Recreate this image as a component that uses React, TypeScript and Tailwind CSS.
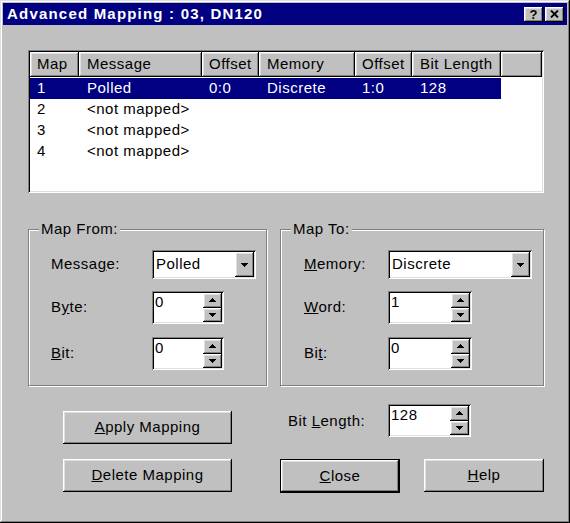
import React from "react";

const raised =
  "shadow-[inset_-1px_-1px_#000,inset_1px_1px_#fff,inset_-2px_-2px_#808080,inset_2px_2px_#dfdfdf]";
const sunken =
  "shadow-[inset_1px_1px_#808080,inset_-1px_-1px_#fff,inset_2px_2px_#000,inset_-2px_-2px_#dfdfdf]";

function Tri({ up }: { up?: boolean }) {
  return (
    <svg width="7" height="4" viewBox="0 0 7 4" shapeRendering="crispEdges">
      {up ? (
        <polygon points="3.5,0 7,4 0,4" fill="#000" />
      ) : (
        <polygon points="0,0 7,0 3.5,4" fill="#000" />
      )}
    </svg>
  );
}

function SmallTri({ up }: { up?: boolean }) {
  return (
    <svg width="7" height="4" viewBox="0 0 7 4" shapeRendering="crispEdges">
      {up ? (
        <polygon points="3.5,0 7,4 0,4" fill="#000" />
      ) : (
        <polygon points="0,0 7,0 3.5,4" fill="#000" />
      )}
    </svg>
  );
}

function Spin({ value, width }: { value: string; width: string }) {
  return (
    <div className={`flex h-[33px] ${width} bg-white p-[2px] ${sunken}`}>
      <div className="flex-1 pl-[1px] leading-[17px]">{value}</div>
      <div className="flex w-[19px] flex-col">
        <div className={`flex flex-1 items-center justify-center bg-[#c0c0c0] ${raised}`}>
          <SmallTri up />
        </div>
        <div className={`flex flex-1 items-center justify-center bg-[#c0c0c0] ${raised}`}>
          <SmallTri />
        </div>
      </div>
    </div>
  );
}

function Combo({ value, width }: { value: string; width: string }) {
  return (
    <div className={`flex h-[29px] ${width} bg-white p-[2px] ${sunken}`}>
      <div className="flex flex-1 items-center pl-[2px]">{value}</div>
      <div className={`flex w-[19px] items-center justify-center bg-[#c0c0c0] ${raised}`}>
        <Tri />
      </div>
    </div>
  );
}

function Button({
  children,
  width,
  isDefault,
}: {
  children: React.ReactNode;
  width: string;
  isDefault?: boolean;
}) {
  if (isDefault) {
    return (
      <div className={`h-[34px] ${width} border border-black`}>
        <div className={`flex h-full w-full items-center justify-center bg-[#c0c0c0] ${raised}`}>
          {children}
        </div>
      </div>
    );
  }
  return (
    <div className={`flex h-[33px] ${width} items-center justify-center bg-[#c0c0c0] ${raised}`}>
      {children}
    </div>
  );
}

const cols = [
  { key: "map", label: "Map", w: "w-[49px]", pl: "pl-[7px]" },
  { key: "msg", label: "Message", w: "w-[123px]", pl: "pl-[8px]" },
  { key: "off", label: "Offset", w: "w-[57px]", pl: "pl-[7px]" },
  { key: "mem", label: "Memory", w: "w-[96px]", pl: "pl-[8px]" },
  { key: "off2", label: "Offset", w: "w-[57px]", pl: "pl-[7px]" },
  { key: "bl", label: "Bit Length", w: "w-[89px]", pl: "pl-[8px]" },
] as const;

type Row = Record<(typeof cols)[number]["key"], string> & { sel?: boolean };

const rows: Row[] = [
  { map: "1", msg: "Polled", off: "0:0", mem: "Discrete", off2: "1:0", bl: "128", sel: true },
  { map: "2", msg: "<not mapped>", off: "", mem: "", off2: "", bl: "" },
  { map: "3", msg: "<not mapped>", off: "", mem: "", off2: "", bl: "" },
  { map: "4", msg: "<not mapped>", off: "", mem: "", off2: "", bl: "" },
];

export default function App() {
  return (
    <div
      className={`flex h-[523px] w-[570px] flex-col bg-[#c0c0c0] p-[3px] font-['Liberation_Sans',Arial,sans-serif] text-[15px] tracking-[0.5px] text-black ${"shadow-[inset_-1px_-1px_#000,inset_1px_1px_#dfdfdf,inset_-2px_-2px_#808080,inset_2px_2px_#fff]"}`}
    >
      {/* Title bar */}
      <div className="flex h-[22px] items-center bg-[#000080] pl-[4px] pr-[3px]">
        <div className="flex-1 text-[15px] font-bold leading-[22px] tracking-[1.2px] text-white">
          Advanced Mapping : 03, DN120
        </div>
        <div className="flex gap-[2px]">
          <div
            className={`flex h-[15px] w-[19px] items-center justify-center bg-[#c0c0c0] text-[13px] font-bold leading-none tracking-normal ${raised}`}
          >
            ?
          </div>
          <div className={`flex h-[15px] w-[19px] items-center justify-center bg-[#c0c0c0] ${raised}`}>
            <svg width="9" height="8" viewBox="0 0 9 8">
              <path d="M1 0.5 L8 7.5 M8 0.5 L1 7.5" stroke="#000" strokeWidth="1.8" />
            </svg>
          </div>
        </div>
      </div>

      <div className="flex flex-col pl-[25px]">
        {/* List */}
        <div className={`mt-[25px] flex h-[143px] w-[516px] flex-col bg-white p-[2px] ${sunken}`}>
          <div className="flex h-[25px]">
            {cols.map((c, i) => (
              <div
                key={i}
                className={`flex h-full ${c.w} ${c.pl} items-center bg-[#c0c0c0] ${raised}`}
              >
                {c.label}
              </div>
            ))}
            <div className={`h-full flex-1 bg-[#c0c0c0] ${raised}`} />
          </div>
          <div className="mt-[1px] flex flex-col">
            {rows.map((r, i) => (
              <div
                key={i}
                className={`flex h-[21px] w-[471px] items-center ${r.sel ? "bg-[#000080] text-white" : ""}`}
              >
                {cols.map((c, j) => (
                  <div key={j} className={`${c.w} ${c.pl} whitespace-nowrap`}>
                    {r[c.key]}
                  </div>
                ))}
              </div>
            ))}
          </div>
        </div>

        {/* Groups */}
        <div className="mt-[36px] flex gap-[13px]">
          <div className="relative h-[157px] w-[239px] border border-[#808080] pl-[22px] pt-[20px] shadow-[inset_1px_1px_#fff,1px_1px_#fff]">
            <span className="absolute -top-[10px] left-[10px] bg-[#c0c0c0] px-[2px] leading-[18px]">
              Map From:
            </span>
            <div className="flex h-[29px] items-center">
              <div className="w-[101px]">
                Messa<span className="underline">g</span>e:
              </div>
              <Combo value="Polled" width="w-[104px]" />
            </div>
            <div className="mt-[12px] flex h-[33px] items-center">
              <div className="w-[101px]">
                B<span className="underline">y</span>te:
              </div>
              <Spin value="0" width="w-[72px]" />
            </div>
            <div className="mt-[13px] flex h-[33px] items-center">
              <div className="w-[101px]">
                <span className="underline">B</span>it:
              </div>
              <Spin value="0" width="w-[72px]" />
            </div>
          </div>

          <div className="relative h-[157px] w-[264px] border border-[#808080] pl-[23px] pt-[20px] shadow-[inset_1px_1px_#fff,1px_1px_#fff]">
            <span className="absolute -top-[10px] left-[10px] bg-[#c0c0c0] px-[2px] leading-[18px]">
              Map To:
            </span>
            <div className="flex h-[29px] items-center">
              <div className="w-[84px]">
                <span className="underline">M</span>emory:
              </div>
              <Combo value="Discrete" width="w-[144px]" />
            </div>
            <div className="mt-[12px] flex h-[33px] items-center">
              <div className="w-[84px]">
                <span className="underline">W</span>ord:
              </div>
              <Spin value="1" width="w-[84px]" />
            </div>
            <div className="mt-[13px] flex h-[33px] items-center">
              <div className="w-[84px]">
                Bi<span className="underline">t</span>:
              </div>
              <Spin value="0" width="w-[84px]" />
            </div>
          </div>
        </div>

        {/* Bottom row 1 */}
        <div className="mt-[18px] flex items-start">
          <div className="ml-[35px] mt-[7px]">
            <Button width="w-[169px]">
              <span>
                <span className="underline">A</span>pply Mapping
              </span>
            </Button>
          </div>
          <div className="ml-[56px] flex h-[33px] w-[100px] items-center pt-[2px]">
            <span>
              Bit <span className="underline">L</span>ength:
            </span>
          </div>
          <Spin value="128" width="w-[83px]" />
        </div>

        {/* Bottom row 2 */}
        <div className="mt-[15px] flex items-start">
          <div className="ml-[35px]">
            <Button width="w-[169px]">
              <span>
                <span className="underline">D</span>elete Mapping
              </span>
            </Button>
          </div>
          <div className="ml-[48px]">
            <Button width="w-[120px]" isDefault>
              <span>
                <span className="underline">C</span>lose
              </span>
            </Button>
          </div>
          <div className="ml-[24px]">
            <Button width="w-[120px]">
              <span>
                <span className="underline">H</span>elp
              </span>
            </Button>
          </div>
        </div>
      </div>
    </div>
  );
}
